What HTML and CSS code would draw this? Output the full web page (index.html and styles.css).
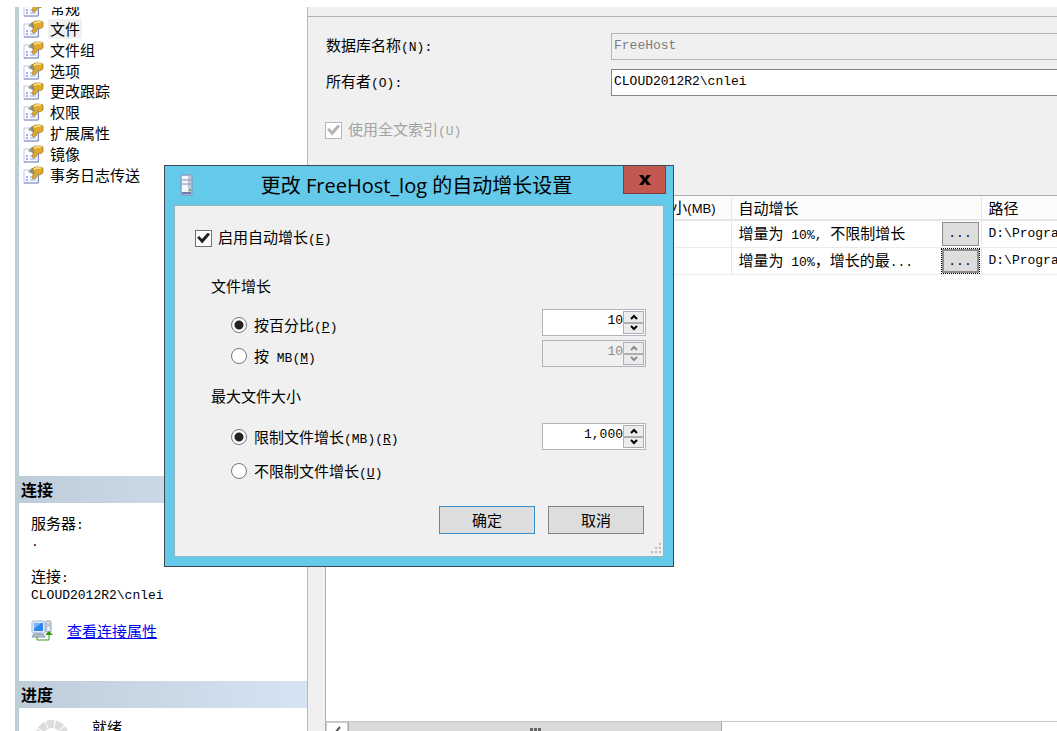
FILE: index.html
```html
<!DOCTYPE html>
<html lang="zh-CN">
<head>
  <meta charset="utf-8">
  <title>数据库属性 - FreeHost</title>
  <link rel="stylesheet" href="styles.css">
</head>
<body>
  <svg class="symbols" aria-hidden="true">
    <symbol id="page" viewBox="0 0 21 18">
      <path d="M1 4h14v13H1z" fill="#fbfcff" stroke="#c0c8e6"/>
      <path d="M1 17h14.500V9" fill="none" stroke="#7e8bbb"/>
      <path d="M3 11h2M3 14h2" stroke="#4f6cc0"/>
      <path d="M7 11h6M7 14h6" stroke="#93a6e0"/>
      <path d="M5 6l4-4 4 1 1 5-3 1-3-2z" fill="#8c9686"/>
      <path d="M9 3l3-2h5l3 1v5l-3 2-2-1-2 4-3 1-1-2 2-4z" fill="#dfa92c" stroke="#8f6c20" stroke-width=".6"/>
      <path d="M11 3l3-1h4" fill="none" stroke="#ffe48a" stroke-width="1.500"/>
    </symbol>
    <symbol id="up" viewBox="0 0 10 8"><path d="M2 6l3-3 3 3" fill="none" stroke="currentColor" stroke-width="2"/></symbol>
    <symbol id="down" viewBox="0 0 10 8"><path d="M2 2l3 3 3-3" fill="none" stroke="currentColor" stroke-width="2"/></symbol>
  </svg>

  <div class="window">
    <aside class="sidebar">
      <ul class="pages">
        <li><svg><use href="#page"/></svg><span>常规</span></li>
        <li><svg><use href="#page"/></svg><span class="current">文件</span></li>
        <li><svg><use href="#page"/></svg><span>文件组</span></li>
        <li><svg><use href="#page"/></svg><span>选项</span></li>
        <li><svg><use href="#page"/></svg><span>更改跟踪</span></li>
        <li><svg><use href="#page"/></svg><span>权限</span></li>
        <li><svg><use href="#page"/></svg><span>扩展属性</span></li>
        <li><svg><use href="#page"/></svg><span>镜像</span></li>
        <li><svg><use href="#page"/></svg><span>事务日志传送</span></li>
      </ul>

      <h2 class="bar">连接</h2>
      <div class="connection">
        <div>服务器<span class="en">:</span></div>
        <div class="en value">.</div>
        <div class="second">连接<span class="en">:</span></div>
        <div class="en value">CLOUD2012R2\cnlei</div>
        <div class="link-row">
          <svg class="server-icon" viewBox="0 0 22 22">
            <rect x="1" y="1" width="13" height="12" rx="1" fill="#dfe8f5" stroke="#a9b9d0"/>
            <rect x="3" y="3" width="9" height="8" fill="#2f86ea"/>
            <path d="M3 3h7l-7 6z" fill="#75b6fa"/>
            <path d="M3 14h9l2 3H1z" fill="#b6c3d4" stroke="#8492a5"/>
            <rect x="15" y="1" width="5" height="11" rx="1" fill="#e7eaf0" stroke="#8d99ab"/>
            <path d="M16 4h3M16 6h3" stroke="#9aa5b8"/>
            <path d="M6 17v3h12v-6" fill="none" stroke="#3c9a16"/>
            <path d="M14 15l4-4 4 4z" fill="#2e9a0d"/>
          </svg>
          <a href="#">查看连接属性</a>
        </div>
      </div>

      <h2 class="bar">进度</h2>
      <div class="progress">
        <svg viewBox="0 0 34 34">
          <circle cx="17" cy="17" r="13" fill="none" stroke="#dcdcdc" stroke-width="8" stroke-dasharray="7 1"/>
        </svg>
        <span>就绪</span>
      </div>
    </aside>

    <main class="content">
      <div class="fields">
        <div class="field">
          <label for="dbname">数据库名称<span class="en">(N):</span></label>
          <input id="dbname" type="text" value="FreeHost" disabled>
        </div>
        <div class="field">
          <label for="owner">所有者<span class="en">(O):</span></label>
          <input id="owner" type="text" value="CLOUD2012R2\cnlei">
        </div>
        <div class="check off">
          <input id="fulltext" type="checkbox" checked disabled>
          <label for="fulltext">使用全文索引<span class="en">(U)</span></label>
        </div>
      </div>

      <div class="files">
        <table>
          <colgroup><col class="col-size"><col class="col-growth"><col></colgroup>
          <thead>
            <tr><th class="size">大小<span class="mb">(MB)</span></th><th>自动增长</th><th>路径</th></tr>
          </thead>
          <tbody>
            <tr>
              <td></td>
              <td><div class="growth"><span>增量为<span class="en"> 10%, </span>不限制增长</span><button class="more en">...</button></div></td>
              <td class="en">D:\Program</td>
            </tr>
            <tr>
              <td></td>
              <td><div class="growth"><span>增量为<span class="en"> 10%</span>，增长的最<span class="en">...</span></span><button class="more en active">...</button></div></td>
              <td class="en">D:\Program</td>
            </tr>
          </tbody>
        </table>
        <div class="scrollbar">
          <button class="scroll-left" aria-label="向左滚动"><svg viewBox="0 0 10 14"><path d="M8 1L3 7l5 6" fill="none" stroke="#555" stroke-width="2"/></svg></button>
          <div class="thumb"><i></i><i></i><i></i></div>
        </div>
      </div>
    </main>
  </div>

  <div class="dialog" role="dialog" aria-labelledby="dialog-title">
    <div class="titlebar">
      <svg class="db-icon" viewBox="0 0 14 22">
        <rect x="1" y="1" width="11" height="20" rx="1" fill="#c3cae0" stroke="#8794b8"/>
        <path d="M2 2h6v17H2z" fill="#f4f6fd"/>
        <path d="M2 6h9M2 10h9" stroke="#7f8cac"/>
        <path d="M2 19h9" stroke="#6f7bb0" stroke-width="2"/>
        <path d="M9 16h2" stroke="#58ad55" stroke-width="2"/>
      </svg>
      <h1 id="dialog-title">更改 FreeHost_log 的自动增长设置</h1>
      <button class="close" aria-label="关闭"><svg viewBox="0 0 12 10"><path d="M0 0h4l2 3 2-3h4L8 5l4 5H8L6 7l-2 3H0l4-5z" fill="#000"/></svg></button>
    </div>
    <form class="panel">
      <div class="check">
        <input id="enable" type="checkbox" checked>
        <label for="enable">启用自动增长<span class="en">(<u>E</u>)</span></label>
      </div>

      <fieldset>
        <legend>文件增长</legend>
        <div class="option">
          <input id="percent" type="radio" name="growth" checked>
          <label for="percent">按百分比<span class="en">(<u>P</u>)</span></label>
          <div class="spinner">
            <input type="text" value="10" aria-label="百分比">
            <span class="steps"><button type="button" aria-label="增加"><svg><use href="#up"/></svg></button><button type="button" aria-label="减少"><svg><use href="#down"/></svg></button></span>
          </div>
        </div>
        <div class="option">
          <input id="mb" type="radio" name="growth">
          <label for="mb">按<span class="en"> MB(<u>M</u>)</span></label>
          <div class="spinner off">
            <input type="text" value="10" aria-label="MB" disabled>
            <span class="steps"><button type="button" aria-label="增加" disabled><svg><use href="#up"/></svg></button><button type="button" aria-label="减少" disabled><svg><use href="#down"/></svg></button></span>
          </div>
        </div>
      </fieldset>

      <fieldset class="max">
        <legend>最大文件大小</legend>
        <div class="option">
          <input id="limited" type="radio" name="max" checked>
          <label for="limited">限制文件增长<span class="en">(MB)(<u>R</u>)</span></label>
          <div class="spinner">
            <input type="text" value="1,000" aria-label="最大文件大小">
            <span class="steps"><button type="button" aria-label="增加"><svg><use href="#up"/></svg></button><button type="button" aria-label="减少"><svg><use href="#down"/></svg></button></span>
          </div>
        </div>
        <div class="option">
          <input id="unlimited" type="radio" name="max">
          <label for="unlimited">不限制文件增长<span class="en">(<u>U</u>)</span></label>
        </div>
      </fieldset>

      <div class="buttons">
        <button type="button" class="default">确定</button>
        <button type="button">取消</button>
      </div>
      <svg class="grip" viewBox="0 0 12 12"><path d="M9 1h2M9 5h2M9 9h2M5 5h2M5 9h2M1 9h2" stroke="#bcbcbc" stroke-width="2"/></svg>
    </form>
  </div>
</body>
</html>
```

FILE: styles.css
```css
* {
  box-sizing: border-box;
}
body {
  margin: 0;
  padding: 7px 0 0 15px;
  height: 100vh;
  overflow: hidden;
  background: #fff;
  color: #000;
  font-family: "Noto Sans CJK SC", sans-serif;
  font-size: 15px;
  line-height: 20px;
}
input, button {
  font: inherit;
  color: inherit;
  margin: 0;
  padding: 0;
}
.symbols {
  display: none;
}
.en, input[type="text"] {
  font-family: "Liberation Mono", monospace;
  font-size: 13px;
  white-space: pre;
}
.window {
  display: flex;
  height: 100%;
  overflow: hidden;
}

/* sidebar */
.sidebar {
  flex: 0 0 293px;
  border-left: 4px solid #bccfd6;
  border-right: 1px solid #b4b7c0;
}
.pages {
  display: grid;
  grid-auto-rows: 1fr;
  height: 187px;
  margin: -9px 0 291px;
  padding: 0 0 0 4px;
  list-style: none;
}
.pages li {
  display: flex;
  align-items: center;
  gap: 4px;
}
.pages svg {
  width: 21px;
  height: 18px;
}
.pages span {
  padding: 0 2px;
}
.pages .current {
  background: #f0f0f0;
}
.bar {
  margin: 0;
  padding: 0 2px;
  font-size: 16px;
  line-height: 26px;
  padding-bottom: 1px;
  background: linear-gradient(to right, #bfcddb, #d5e3f2);
}
.connection {
  height: 178px;
  padding: 11px 12px 0;
  line-height: 18px;
}
.connection .value {
  line-height: 16px;
}
.connection .second {
  margin-top: 16px;
}
.link-row {
  display: flex;
  align-items: center;
  gap: 14px;
  margin-top: 16px;
}
.link-row a {
  color: #0000f0;
}
.server-icon {
  width: 22px;
  height: 22px;
}
.progress {
  display: flex;
  gap: 23px;
  padding: 9px 16px;
}
.progress svg {
  width: 34px;
  height: 34px;
  margin-top: 3px;
}

/* file page */
.content {
  flex: 1;
  min-width: 0;
  display: flex;
  flex-direction: column;
  background: #f0f0f0;
}
.fields {
  height: 179px;
  margin-top: 9px;
  padding: 16px 0 0 18px;
  border-top: 1px solid #b0b3bb;
}
.field {
  display: flex;
  align-items: center;
  height: 27px;
  margin-bottom: 9px;
}
.field label {
  flex: 0 0 285px;
}
.field input {
  flex: 1;
  height: 27px;
  padding: 0 2px 3px;
  border: 1px solid #858585;
  border-right: 0;
  background: #fff;
}
.field input:disabled {
  border-color: #b3b6ba;
  background: #f0f0f0;
  color: #7c7c7c;
}
.check {
  display: flex;
  align-items: center;
  gap: 6px;
  height: 26px;
}
.fields .check {
  margin-top: 21px;
  margin-left: -1px;
}
.off {
  color: #a3a3a3;
}
.check input {
  appearance: none;
  display: grid;
  place-items: center;
  width: 17px;
  height: 17px;
  border: 1px solid #707070;
  background: #fff;
}
.check input:checked::before {
  content: "";
  width: 13px;
  height: 11px;
  background: #222;
  clip-path: polygon(0 45%, 18% 32%, 38% 60%, 84% 0, 100% 18%, 40% 100%);
}
.check input:disabled {
  border-color: #b5b8ba;
}
.check input:disabled::before {
  background: #aeb4b8;
}
.files {
  flex: 1;
  display: flex;
  flex-direction: column;
  margin-left: 17px;
  border: 1px solid #aaaeb8;
  border-width: 1px 0 0 1px;
  background: #fff;
}
table {
  width: 100%;
  table-layout: fixed;
  border-collapse: collapse;
}
.col-size {
  width: 405px;
}
.col-growth {
  width: 250px;
}
th, td {
  overflow: hidden;
  padding: 0 0 0 7px;
  border-right: 1px solid #e8e8e8;
  border-bottom: 1px solid #ececec;
  text-align: left;
  white-space: nowrap;
}
th:last-child, td:last-child {
  border-right: 0;
}
th {
  height: 24px;
  font-weight: normal;
  background: #fcfcfc;
  border-bottom: 2px solid #e6e6e6;
}
.size {
  padding-right: 15px;
  text-align: right;
}
.mb {
  font-family: "Liberation Sans", sans-serif;
  font-size: 13px;
}
td {
  height: 27px;
}
.growth {
  display: flex;
  justify-content: space-between;
  height: 26px;
  line-height: 24px;
}
.more {
  width: 37px;
  height: 24px;
  margin: 1px 2px;
  border: 1px solid #8c8c8c;
  background: #ddd;
  line-height: 22px;
}
.more.active {
  outline: 1px dotted #000;
  border-width: 2px;
}
.scrollbar {
  display: flex;
  height: 10px;
  margin-top: auto;
  overflow: hidden;
  border-top: 1px solid #c6c6c6;
}
.scroll-left {
  width: 22px;
  height: 24px;
  border: 1px solid #ccc;
  background: #fff;
}
.scroll-left svg {
  width: 10px;
  height: 14px;
}
.thumb {
  display: flex;
  justify-content: center;
  gap: 1px;
  width: 374px;
  height: 24px;
  padding-top: 6px;
  border: 1px solid #a9a9a9;
  border-top: 0;
  background: #dadada;
}
.thumb i {
  width: 3px;
  height: 10px;
  background: #666;
}

/* autogrowth dialog */
.dialog {
  position: absolute;
  left: 164px;
  top: 165px;
  width: 510px;
  padding: 0 9px 9px;
  border: 1px solid #3f4a50;
  background: #65c9e9;
}
.titlebar {
  display: flex;
  align-items: flex-start;
  height: 39px;
}
.db-icon {
  width: 14px;
  height: 22px;
  margin: 8px 0 0 6px;
}
.titlebar h1 {
  flex: 1;
  margin: 0;
  padding-left: 16px;
  text-align: center;
  font-family: "Open Sans", "Noto Sans CJK SC", sans-serif;
  font-size: 20px;
  font-weight: normal;
  line-height: 39px;
}
.close {
  display: grid;
  place-items: center;
  width: 43px;
  height: 28px;
  margin-right: -2px;
  border: 1px solid #843a36;
  border-top: 0;
  background: #c35850;
}
.close svg {
  width: 12px;
  height: 10px;
}
.panel {
  position: relative;
  padding: 19px 17px 22px 20px;
  border: 1px solid #90b6c4;
  background: #f0f0f0;
}
fieldset {
  margin: 22px 0 0;
  padding: 0;
  border: 0;
}
fieldset.max {
  margin-top: 12px;
}
legend {
  margin: 0 0 10px 16px;
  padding: 0;
  line-height: 26px;
}
.max legend {
  margin-bottom: 12px;
}
.option {
  display: flex;
  height: 28px;
  margin: 0 0 3px 36px;
}
.max .option {
  margin-bottom: 6px;
}
.option > input {
  appearance: none;
  width: 16px;
  height: 16px;
  margin-top: 8px;
  border: 1px solid #777;
  border-radius: 50%;
  background: #fff;
}
.option > input:checked {
  background: radial-gradient(circle, #222 4px, #fff 5px);
}
.option label {
  flex: 1;
  padding: 6px 0 0 7px;
}
.spinner {
  display: flex;
  width: 104px;
  height: 27px;
  padding: 1px;
  border: 1px solid #b1b3bd;
  background: #fff;
}
.max .spinner {
  margin-top: 2px;
}
.spinner input {
  flex: 1;
  min-width: 0;
  padding-bottom: 4px;
  border: 0;
  background: none;
  text-align: right;
}
.steps {
  display: flex;
  flex-direction: column;
  width: 21px;
}
.steps button {
  display: grid;
  place-items: center;
  height: 12px;
  border: 1px solid #adafb7;
  background: #ececec;
}
.steps svg {
  width: 10px;
  height: 8px;
}
.spinner.off {
  background: #f0f0f0;
  color: #8c8c8c;
}
.off input {
  color: #8c8c8c;
}
.buttons {
  display: flex;
  justify-content: flex-end;
  gap: 13px;
  margin-top: 17px;
  padding-right: 2px;
}
.buttons button {
  width: 96px;
  height: 28px;
  border: 1px solid #858585;
  background: #ddd;
}
.buttons .default {
  border-color: #3c8fc8;
}
.grip {
  position: absolute;
  right: 1px;
  bottom: 1px;
  width: 12px;
  height: 12px;
}
```
